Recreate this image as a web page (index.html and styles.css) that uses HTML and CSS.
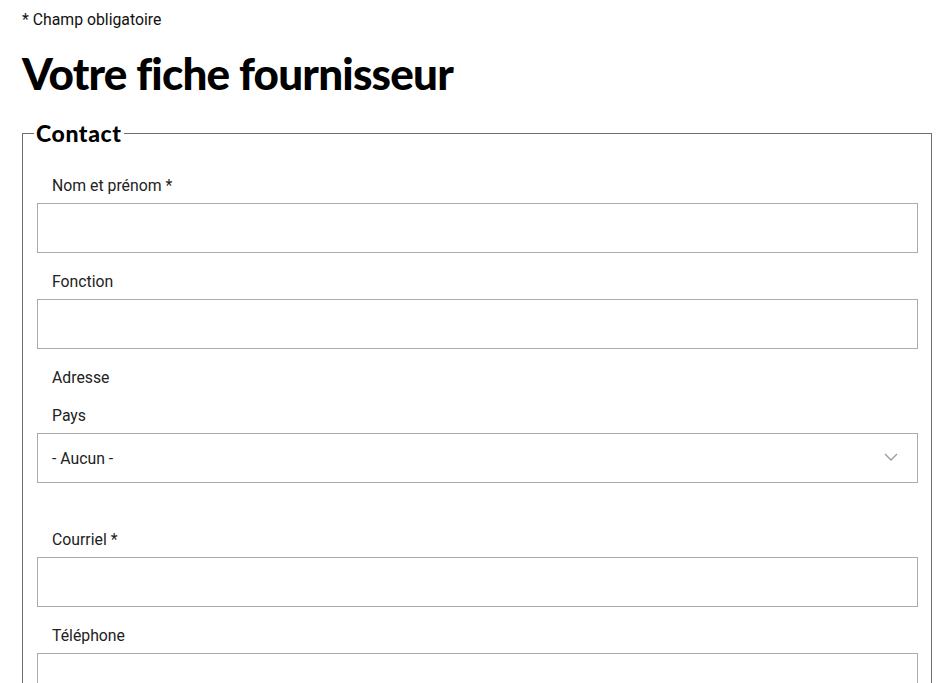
FILE: index.html
```html
<!DOCTYPE html>
<html lang="fr">
<head>
<meta charset="utf-8">
<title>Votre fiche fournisseur</title>
<link rel="stylesheet" href="styles.css">
</head>
<body>
<p class="note">* Champ obligatoire</p>
<h1 class="title">Votre fiche fournisseur</h1>
<form class="form">
  <fieldset class="group">
    <legend class="group-legend">Contact</legend>
    <div class="field">
      <label class="field-label" for="nom">Nom et prénom *</label>
      <input class="field-input" id="nom" type="text">
    </div>
    <div class="field">
      <label class="field-label" for="fonction">Fonction</label>
      <input class="field-input" id="fonction" type="text">
    </div>
    <div class="field field-address">
      <div class="field-label field-label-group">Adresse</div>
      <label class="field-label" for="pays">Pays</label>
      <div class="select-wrap">
        <select class="field-input field-select" id="pays">
          <option>- Aucun -</option>
        </select>
        <svg class="select-chevron" width="14" height="8" viewBox="0 0 14 8" aria-hidden="true">
          <path d="M1 1 L7 7 L13 1" fill="none" stroke="#9a9a9a" stroke-width="1.3"/>
        </svg>
      </div>
    </div>
    <div class="field">
      <label class="field-label" for="courriel">Courriel *</label>
      <input class="field-input" id="courriel" type="email">
    </div>
    <div class="field">
      <label class="field-label" for="tel">Téléphone</label>
      <input class="field-input" id="tel" type="tel">
    </div>
  </fieldset>
</form>
</body>
</html>
```
FILE: styles.css
```css
html, body {
  margin: 0;
  padding: 0;
  background: #fff;
}
body {
  padding: 9px 18px 40px 22px;
  font-family: Roboto, "Liberation Sans", Arial, sans-serif;
  color: #1a1a1a;
}
.note {
  margin: 0;
  font-size: 15.8px;
  line-height: 21px;
  color: #111;
}
.title {
  margin: 17px 0 0;
  font-family: Lato, "Liberation Sans", sans-serif;
  font-weight: 900;
  font-size: 44px;
  line-height: 53px;
  color: #000;
  letter-spacing: -0.8px;
}
.form {
  margin: 22px 0 0;
}
.group {
  margin: 0;
  padding: 31px 13px 0 14px;
  border: 1px solid #6e6e6e;
  min-width: 0;
}
.group-legend {
  margin-left: -3px;
  padding: 0 2px;
  font-family: Lato, "Liberation Sans", sans-serif;
  font-weight: 900;
  font-size: 23px;
  line-height: 22px;
  letter-spacing: 0.6px;
  color: #000;
}
.field {
  display: flex;
  flex-direction: column;
  margin-bottom: 18px;
}
.field-label {
  display: block;
  padding-left: 15px;
  margin-bottom: 6px;
  font-size: 15.8px;
  line-height: 22px;
  color: #222;
}
.field-label-group {
  margin-bottom: 16px;
}
.field-address {
  margin-bottom: 46px;
}
.field-input {
  box-sizing: border-box;
  display: block;
  width: 100%;
  height: 50px;
  margin: 0;
  padding: 0 14px;
  border: 1px solid #ababab;
  border-radius: 0;
  background: #fff;
  font-family: Roboto, "Liberation Sans", Arial, sans-serif;
  font-size: 15.8px;
  color: #222;
}
.select-wrap {
  position: relative;
}
.field-select {
  appearance: none;
  -webkit-appearance: none;
}
.select-chevron {
  position: absolute;
  right: 20px;
  top: 20px;
  pointer-events: none;
}
```
